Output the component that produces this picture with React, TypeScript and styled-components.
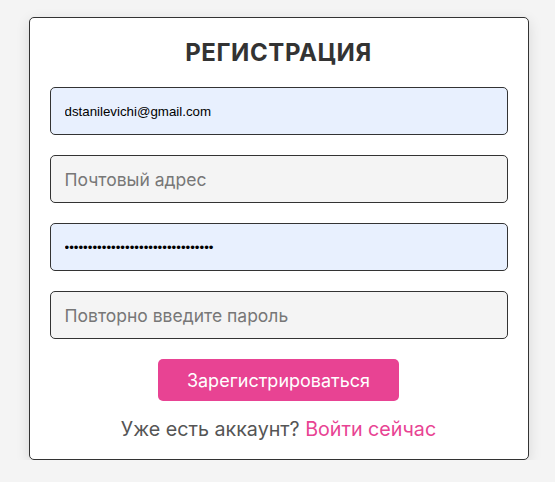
import React from 'react';
import styled, { createGlobalStyle } from 'styled-components';

const GlobalStyle = createGlobalStyle`
  html, body {
    margin: 0;
    padding: 0;
    background: #f4f4f4;
  }
  * {
    box-sizing: border-box;
  }
`;

const Page = styled.div`
  display: flex;
  justify-content: center;
  padding: 17px 0 0 2px;
  font-family: Inter, 'Noto Sans', sans-serif;
`;

const Card = styled.form`
  width: 500px;
  background: #fff;
  border: 1px solid #333;
  border-radius: 5px;
  box-shadow: 0 4px 14px rgba(0, 0, 0, 0.12);
  padding: 20px 20px 18px;
  display: flex;
  flex-direction: column;
  align-items: center;
`;

const Title = styled.h2`
  margin: 0 0 20px;
  font-size: 24px;
  font-weight: 700;
  color: #333;
  letter-spacing: 0.6px;
`;

const Field = styled.input<{ $filled?: boolean }>`
  width: 100%;
  height: 48px;
  margin-bottom: 20px;
  padding: 0 14px;
  border: 1px solid #333;
  border-radius: 5px;
  background: ${(p) => (p.$filled ? '#e8f0fe' : '#f4f4f4')};
  font-family: ${(p) => (p.$filled ? "'Liberation Sans', Arial, sans-serif" : "Inter, 'Noto Sans', sans-serif")};
  font-size: ${(p) => (p.$filled ? '13.3px' : '17.5px')};
  color: #000;
  outline: none;

  &::placeholder {
    color: #777;
  }
`;

const SubmitButton = styled.button`
  width: 241px;
  height: 42px;
  margin: 0 0 16px;
  border: none;
  border-radius: 5px;
  background: #e84393;
  color: #fff;
  font-family: Inter, 'Noto Sans', sans-serif;
  font-size: 18px;
  cursor: pointer;
`;

const Footer = styled.p`
  margin: 0;
  font-size: 19.7px;
  color: #555;
`;

const Link = styled.a`
  color: #e84393;
  text-decoration: none;
`;

export default function App() {
  return (
    <>
      <GlobalStyle />
      <Page>
        <Card onSubmit={(e) => e.preventDefault()}>
          <Title>РЕГИСТРАЦИЯ</Title>
          <Field $filled type="text" defaultValue="dstanilevichi@gmail.com" placeholder="Введите логин" />
          <Field type="email" placeholder="Почтовый адрес" />
          <Field $filled type="password" defaultValue="••••••••••••••••••••••••••••••••" placeholder="Пароль" />
          <Field type="password" placeholder="Повторно введите пароль" />
          <SubmitButton type="submit">Зарегистрироваться</SubmitButton>
          <Footer>
            Уже есть аккаунт? <Link href="#">Войти сейчас</Link>
          </Footer>
        </Card>
      </Page>
    </>
  );
}
